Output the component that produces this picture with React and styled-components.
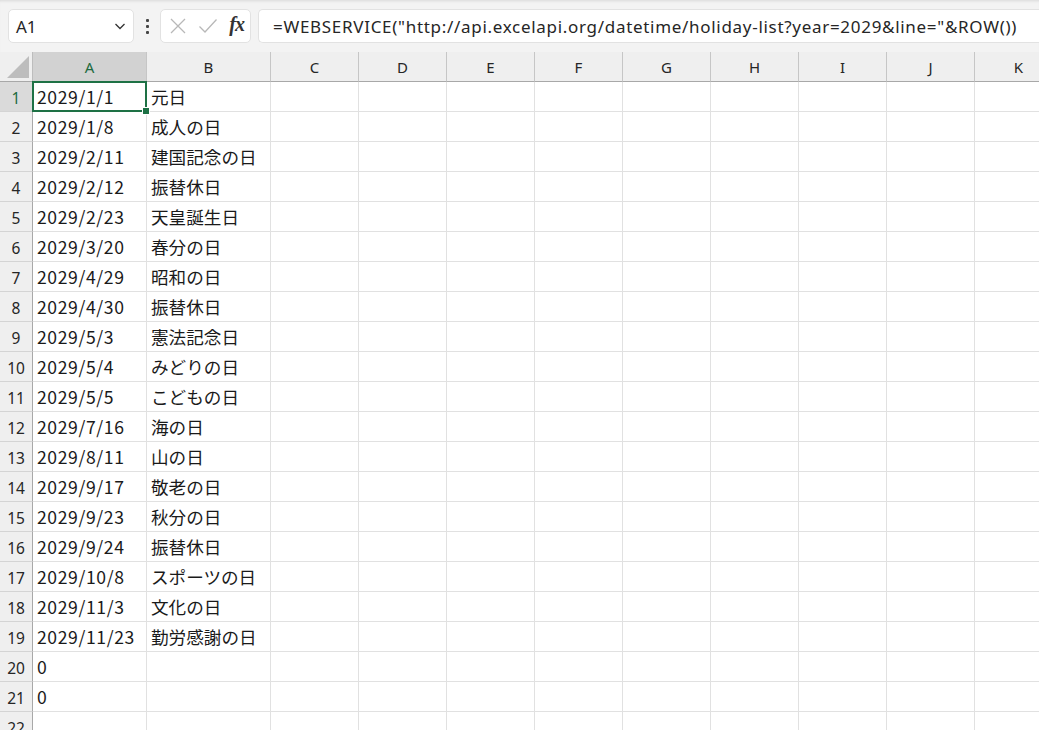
import React from "react";
import styled, { createGlobalStyle } from "styled-components";

const GlobalStyle = createGlobalStyle`
  html, body {
    margin: 0;
    padding: 0;
    background: #ffffff;
    overflow: hidden;
  }
  body {
    font-family: "Noto Sans", "Noto Sans CJK JP", sans-serif;
  }
`;

const COLS = ["A", "B", "C", "D", "E", "F", "G", "H", "I", "J", "K"];
const WIDTHS = [114, 124, 88, 88, 88, 88, 88, 88, 88, 88, 88];

const rows = [
  ["2029/1/1", "元日"],
  ["2029/1/8", "成人の日"],
  ["2029/2/11", "建国記念の日"],
  ["2029/2/12", "振替休日"],
  ["2029/2/23", "天皇誕生日"],
  ["2029/3/20", "春分の日"],
  ["2029/4/29", "昭和の日"],
  ["2029/4/30", "振替休日"],
  ["2029/5/3", "憲法記念日"],
  ["2029/5/4", "みどりの日"],
  ["2029/5/5", "こどもの日"],
  ["2029/7/16", "海の日"],
  ["2029/8/11", "山の日"],
  ["2029/9/17", "敬老の日"],
  ["2029/9/23", "秋分の日"],
  ["2029/9/24", "振替休日"],
  ["2029/10/8", "スポーツの日"],
  ["2029/11/3", "文化の日"],
  ["2029/11/23", "勤労感謝の日"],
  ["0", ""],
  ["0", ""],
  ["", ""],
];

const Page = styled.div`
  width: 1039px;
  height: 730px;
  overflow: hidden;
  display: flex;
  flex-direction: column;
`;

const Toolbar = styled.div`
  height: 52px;
  flex: none;
  box-sizing: border-box;
  background: #f3f3f3;
  display: flex;
  align-items: center;
  padding: 0 0 0 8px;
  box-shadow: inset 0 3px 3px -2px #d8d8d8;
`;

const Box = styled.div`
  height: 34px;
  box-sizing: border-box;
  background: #ffffff;
  border: 1px solid #e2e2e2;
  border-radius: 5px;
  display: flex;
  align-items: center;
`;

const NameBox = styled(Box)`
  width: 126px;
  padding: 0 6px 0 7px;
  justify-content: space-between;
  font-size: 17px;
  color: #262626;
`;

const Dots = styled.div`
  width: 26px;
  display: flex;
  flex-direction: column;
  align-items: center;
  gap: 3px;
  span {
    width: 3px;
    height: 3px;
    background: #444;
    border-radius: 1px;
  }
`;

const IconBox = styled(Box)`
  width: 91px;
  padding: 0 6px 0 8px;
  justify-content: space-between;
`;

const Fx = styled.span`
  font-family: "Liberation Serif", serif;
  font-style: italic;
  font-weight: bold;
  font-size: 20px;
  color: #333;
  letter-spacing: -1px;
  margin-top: -3px;
`;

const FormulaBox = styled(Box)`
  margin-left: 7px;
  flex: 1;
  border-right: none;
  border-radius: 5px 0 0 5px;
  padding-left: 14px;
  font-size: 17px;
  letter-spacing: 0.7px;
  color: #262626;
  white-space: nowrap;
  overflow: hidden;
`;

const Grid = styled.div`
  display: grid;
  grid-template-columns: 33px ${WIDTHS.map((w) => w + "px").join(" ")};
  grid-auto-rows: 30px;
`;

const Corner = styled.div`
  background: #efefef;
  border-right: 1px solid #bdbdbd;
  border-bottom: 1px solid #a8a8a8;
  box-sizing: border-box;
  position: relative;
  overflow: hidden;
  &::after {
    content: "";
    position: absolute;
    right: 3px;
    bottom: 3px;
    width: 22px;
    height: 22px;
    background: #bdbdbd;
    clip-path: polygon(100% 0, 100% 100%, 0 100%);
  }
`;

const ColHead = styled.div`
  box-sizing: border-box;
  background: ${(p) => (p.$active ? "#d2d2d2" : "#efefef")};
  color: ${(p) => (p.$active ? "#1e6b41" : "#262626")};
  border-right: 1px solid #c6c6c6;
  border-bottom: 1px solid #a8a8a8;
  display: flex;
  align-items: center;
  justify-content: center;
  font-size: 15px;
  padding-top: 1px;
`;

const RowHead = styled.div`
  box-sizing: border-box;
  background: ${(p) => (p.$active ? "#dadada" : "#efefef")};
  color: ${(p) => (p.$active ? "#1e6b41" : "#262626")};
  border-right: 1px solid #a8a8a8;
  border-bottom: 1px solid #d4d4d4;
  display: flex;
  align-items: center;
  justify-content: center;
  font-size: 15.5px;
  padding-top: 2px;
`;

const Cell = styled.div`
  box-sizing: border-box;
  border-right: 1px solid #e1e1e1;
  border-bottom: 1px solid #e1e1e1;
  font-family: "Noto Sans CJK JP", sans-serif;
  font-size: 17.6px;
  letter-spacing: ${(p) => (p.$num ? "0.6px" : "0")};
  color: #1a1a1a;
  padding: 0 4px;
  display: flex;
  align-items: center;
  white-space: nowrap;
  position: relative;
  ${(p) =>
    p.$selected &&
    `
    &::before {
      content: "";
      position: absolute;
      left: -1px;
      top: -1px;
      right: -1px;
      bottom: -1px;
      border: 2px solid #1e7145;
      pointer-events: none;
    }
    &::after {
      content: "";
      position: absolute;
      right: -4px;
      bottom: -4px;
      width: 6px;
      height: 6px;
      background: #1e7145;
      border: 1px solid #fff;
      z-index: 2;
    }
  `}
`;

const Chevron = () => (
  <svg width="14" height="14" viewBox="0 0 14 14" fill="none">
    <path d="M2.5 5l4.5 4.5L11.5 5" stroke="#333" strokeWidth="1.3" />
  </svg>
);

const Cross = () => (
  <svg width="18" height="18" viewBox="0 0 18 18" fill="none">
    <path d="M2 2l14 14M16 2L2 16" stroke="#b8b8b8" strokeWidth="1.3" />
  </svg>
);

const Check = () => (
  <svg width="20" height="18" viewBox="0 0 20 18" fill="none">
    <path d="M1.5 9.5l5.5 5.5L18.5 2.5" stroke="#b8b8b8" strokeWidth="1.3" />
  </svg>
);

export default function App() {
  return (
    <Page>
      <GlobalStyle />
      <Toolbar>
        <NameBox>
          <span>A1</span>
          <Chevron />
        </NameBox>
        <Dots>
          <span />
          <span />
          <span />
        </Dots>
        <IconBox>
          <Cross />
          <Check />
          <Fx>fx</Fx>
        </IconBox>
        <FormulaBox>
          =WEBSERVICE("http://api.excelapi.org/datetime/holiday-list?year=2029&amp;line="&amp;ROW())
        </FormulaBox>
      </Toolbar>
      <Grid>
        <Corner />
        {COLS.map((c) => (
          <ColHead key={c} $active={c === "A"}>
            {c}
          </ColHead>
        ))}
        {rows.map((r, i) => (
          <React.Fragment key={i}>
            <RowHead $active={i === 0}>{i + 1}</RowHead>
            {COLS.map((c, j) => (
              <Cell key={c} $num={j === 0} $selected={i === 0 && j === 0}>
                {j < 2 ? r[j] : ""}
              </Cell>
            ))}
          </React.Fragment>
        ))}
      </Grid>
    </Page>
  );
}
